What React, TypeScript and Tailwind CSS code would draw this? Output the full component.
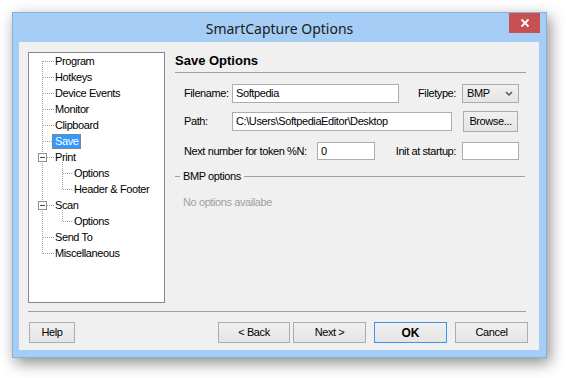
const ui = { fontFamily: '"Liberation Sans", Arial, sans-serif' };

type Node = { label: string; level: 1 | 2; expander?: boolean; selected?: boolean };

const tree: Node[] = [
  { label: "Program", level: 1 },
  { label: "Hotkeys", level: 1 },
  { label: "Device Events", level: 1 },
  { label: "Monitor", level: 1 },
  { label: "Clipboard", level: 1 },
  { label: "Save", level: 1, selected: true },
  { label: "Print", level: 1, expander: true },
  { label: "Options", level: 2 },
  { label: "Header & Footer", level: 2 },
  { label: "Scan", level: 1, expander: true },
  { label: "Options", level: 2 },
  { label: "Send To", level: 1 },
  { label: "Miscellaneous", level: 1 },
];

const rowY = (i: number) => 8 + 16 * i;

function TreeLines() {
  const dot = { stroke: "#a0a0a0", strokeDasharray: "1 1", shapeRendering: "crispEdges" as const };
  return (
    <svg className="absolute left-0 top-0" width="135" height="249">
      <line x1="13.5" y1={rowY(0)} x2="13.5" y2={rowY(12) + 1} {...dot} />
      {tree.map((n, i) =>
        n.level === 1 ? (
          <line key={i} x1="14" y1={rowY(i) + 0.5} x2="25" y2={rowY(i) + 0.5} {...dot} />
        ) : (
          <line key={i} x1="34" y1={rowY(i) + 0.5} x2="44" y2={rowY(i) + 0.5} {...dot} />
        )
      )}
      <line x1="33.5" y1={rowY(6) + 5} x2="33.5" y2={rowY(8) + 1} {...dot} />
      <line x1="33.5" y1={rowY(9) + 5} x2="33.5" y2={rowY(10) + 1} {...dot} />
      {[6, 9].map((i) => (
        <g key={i} shapeRendering="crispEdges">
          <rect x="9.5" y={rowY(i) - 3.5} width="8" height="8" fill="#fff" stroke="#919191" />
          <line x1="11" y1={rowY(i) + 0.5} x2="16" y2={rowY(i) + 0.5} stroke="#2d4f86" />
        </g>
      ))}
    </svg>
  );
}

function Btn({ children, w, def }: { children: React.ReactNode; w: string; def?: boolean }) {
  return (
    <div
      className={`${w} h-[21px] flex items-center justify-center text-[11px] text-black bg-gradient-to-b from-[#f0f0f0] to-[#e5e5e5] border ${
        def ? "border-[#3c96e6] font-bold text-[12px] tracking-normal" : "border-[#acacac]"
      }`}
    >
      {children}
    </div>
  );
}

function Field({ w, value }: { w: string; value?: string }) {
  return (
    <div className={`${w} h-full bg-white border border-[#abadb3] flex items-center pl-[3px] text-[11px] text-black`}>
      {value}
    </div>
  );
}

export default function App() {
  return (
    <div className="w-[566px] h-[378px] bg-white pt-[12px] pl-[12px] tracking-[-0.4px]" style={ui}>
      <div className="w-[535px] h-[346px] border border-[#8aaed4] bg-[#a5cdf5] shadow-[3px_5px_14px_rgba(0,0,0,0.45)] flex flex-col">
        <div className="relative h-[29px] flex items-center justify-center">
          <span
            className="text-[14px] text-[#1a1a1a] pt-[2px] tracking-normal"
            style={{ fontFamily: '"Noto Sans", "Open Sans", sans-serif' }}
          >
            SmartCapture Options
          </span>
          <div className="absolute right-[6px] top-0 w-[31px] h-[20px] bg-[#c75050] flex items-center justify-center">
            <svg width="10" height="10" viewBox="0 0 10 10">
              <path d="M1.5 1.5 L8.5 8.5 M8.5 1.5 L1.5 8.5" stroke="#fff" strokeWidth="1.8" />
            </svg>
          </div>
        </div>

        <div className="ml-[6px] w-[520px] h-[308px] bg-[#f0f0f0] flex flex-col">
          <div className="flex pt-[10px] pl-[9px]">
            <div className="relative w-[137px] h-[251px] bg-white border border-[#828790]">
              <TreeLines />
              <div className="relative flex flex-col">
                {tree.map((n, i) => (
                  <div key={i} className={`h-[16px] flex items-center ${n.level === 1 ? "pl-[23px]" : "pl-[42px]"}`}>
                    <span
                      className={`h-[15px] leading-[13px] px-[2px] border text-[11px] ${
                        n.selected
                          ? "bg-[#3399ff] text-white border-dotted border-[#c0782a]"
                          : "border-transparent text-black"
                      }`}
                    >
                      {n.label}
                    </span>
                  </div>
                ))}
              </div>
            </div>

            <div className="ml-[10px] w-[351px] flex flex-col text-[11px] text-black">
              <div className="h-[21px] border-b border-[#a0a0a0] text-[13px] font-bold leading-[17px] tracking-normal">
                Save Options
              </div>

              <div className="mt-[11px] h-[19px] flex items-center pl-[9px] pr-[7px]">
                <span className="w-[48px]">Filename:</span>
                <Field w="w-[167px]" value="Softpedia" />
                <span className="flex-1 text-right pr-[6px]">Filetype:</span>
                <div className="w-[57px] h-full flex items-center justify-between pl-[4px] pr-[5px] bg-gradient-to-b from-[#f0f0f0] to-[#e5e5e5] border border-[#acacac]">
                  <span>BMP</span>
                  <svg width="8" height="6" viewBox="0 0 8 6">
                    <path d="M1 1 L4 4 L7 1" stroke="#555" strokeWidth="1.5" fill="none" />
                  </svg>
                </div>
              </div>

              <div className="mt-[9px] h-[19px] flex items-center pl-[9px] pr-[8px]">
                <span className="w-[48px]">Path:</span>
                <Field w="w-[220px]" value="C:\Users\SoftpediaEditor\Desktop" />
                <div className="ml-auto">
                  <Btn w="w-[55px]">Browse...</Btn>
                </div>
              </div>

              <div className="mt-[11px] h-[18px] flex items-center pl-[9px] pr-[7px]">
                <span className="w-[133px]">Next number for token %N:</span>
                <Field w="w-[58px]" value="0" />
                <span className="flex-1 text-right pr-[6px]">Init at startup:</span>
                <Field w="w-[57px]" />
              </div>

              <div className="mt-[9px] h-[14px] flex items-center">
                <div className="w-[5px] h-px bg-[#a0a0a0]" />
                <span className="px-[3px]">BMP options</span>
                <div className="flex-1 h-px bg-[#a0a0a0] mr-px" />
              </div>

              <div className="mt-[11px] h-[14px] pl-[8px] text-[#a0a0a0]">No options availabe</div>
            </div>
          </div>

          <div className="mt-[8px] ml-[9px] w-[498px] h-px bg-[#a0a0a0]" />

          <div className="mt-[10px] flex pl-[10px]">
            <Btn w="w-[46px]">Help</Btn>
            <div className="ml-[143px]">
              <Btn w="w-[72px]">&lt; Back</Btn>
            </div>
            <div className="ml-[3px]">
              <Btn w="w-[73px]">Next &gt;</Btn>
            </div>
            <div className="ml-[8px]">
              <Btn w="w-[73px]" def>OK</Btn>
            </div>
            <div className="ml-[8px]">
              <Btn w="w-[73px]">Cancel</Btn>
            </div>
          </div>
        </div>
      </div>
    </div>
  );
}
